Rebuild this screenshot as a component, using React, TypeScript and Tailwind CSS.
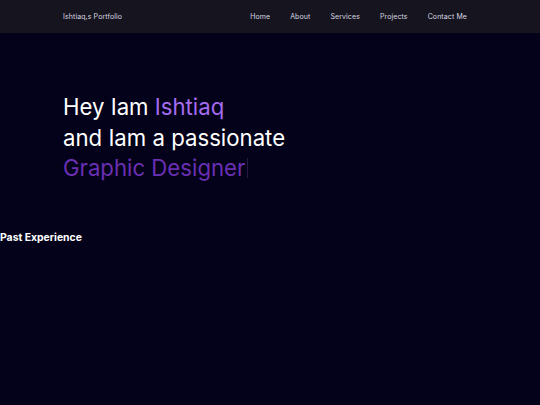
export default function App() {
  const font = { fontFamily: 'Inter, "Open Sans", sans-serif' };
  return (
    <div className="min-h-[405px] w-[540px] bg-[#03021a] text-white" style={font}>
      <nav className="h-[33px] bg-[#16151f] flex items-center justify-between pl-[63px] pr-[73px] pt-[2px]">
        <div className="text-[7px] text-[#d8d8e0] tracking-[0.1px]">Ishtiaq,s Portfolio</div>
        <ul className="flex gap-[20px] text-[7px] text-[#d8d8e0] tracking-[0.1px]">
          <li>Home</li>
          <li>About</li>
          <li>Services</li>
          <li>Projects</li>
          <li>Contact Me</li>
        </ul>
      </nav>
      <section className="pl-[63px] pt-[59px] text-[22.2px] leading-[30.5px] font-normal">
        <div>
          Hey Iam <span className="text-[#a56cf0]">Ishtiaq</span>
        </div>
        <div>and Iam a passionate</div>
        <div className="flex items-center">
          <span className="text-[#6a2fb3]">Graphic Designer</span>
          <span className="ml-[2px] inline-block w-[1px] h-[20px] bg-[#221a40]"></span>
        </div>
      </section>
      <h2 className="mt-[46px] text-[10.4px] font-bold">Past Experience</h2>
    </div>
  );
}
